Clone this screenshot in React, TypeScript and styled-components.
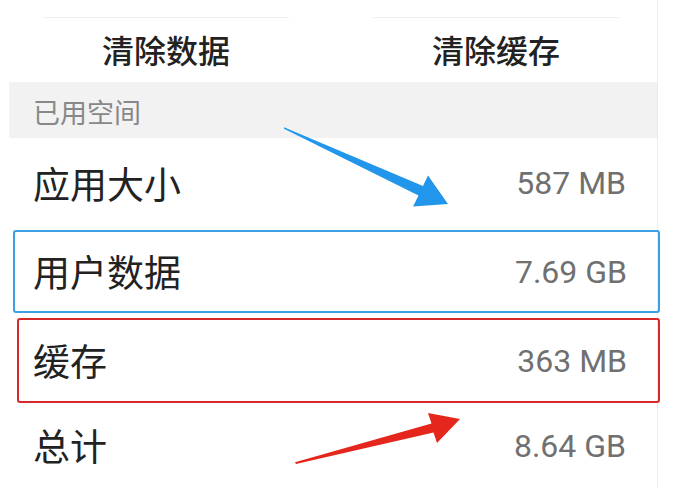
import React from "react";
import styled, { createGlobalStyle } from "styled-components";

const Global = createGlobalStyle`
  html, body { margin: 0; padding: 0; background: #ffffff; }
  body { font-family: "Noto Sans CJK SC", "Noto Sans", sans-serif; }
`;

const Page = styled.div`
  position: relative;
  width: 675px;
  height: 501px;
  overflow: hidden;
  background: #ffffff;
`;

const Panel = styled.div`
  margin-left: 9px;
  width: 648px;
  height: 488px;
  border-right: 1px solid #ececec;
  background: #ffffff;
  display: flex;
  flex-direction: column;
`;

const Header = styled.div`
  height: 82px;
  box-sizing: border-box;
  padding: 17px 38px 0 34px;
  display: grid;
  grid-template-columns: 1fr 1fr;
  column-gap: 84px;
`;

const ActionButton = styled.div`
  border-top: 1px solid #efefef;
  display: flex;
  align-items: center;
  justify-content: center;
  font-size: 32px;
  font-weight: 500;
  color: #222222;
  line-height: 1;
  padding-bottom: 2px;
`;

const SectionLabel = styled.div`
  height: 56px;
  box-sizing: border-box;
  background: #f2f2f2;
  padding-left: 24px;
  display: flex;
  align-items: center;
  font-size: 27px;
  color: #888888;
  line-height: 1;
  padding-top: 2px;
`;

type Tone = "none" | "blue" | "red";

const toneColor: Record<Tone, string> = {
  none: "transparent",
  blue: "#3b9fe1",
  red: "#d8272d",
};

const toneLeft: Record<Tone, number> = { none: 0, blue: 4, red: 8 };

const Row = styled.div<{ $tone: Tone; $h: number; $mt: number }>`
  box-sizing: border-box;
  height: ${(p) => p.$h}px;
  margin-top: ${(p) => p.$mt}px;
  display: flex;
  align-items: center;
  justify-content: space-between;
  border: 2px solid ${(p) => toneColor[p.$tone]};
  border-radius: 3px;
  margin-left: ${(p) => toneLeft[p.$tone]}px;
  margin-right: ${(p) => (p.$tone === "none" ? 0 : -3)}px;
  padding-left: ${(p) => 22 - toneLeft[p.$tone]}px;
  padding-right: ${(p) => (p.$tone === "none" ? 29 : 31)}px;
`;

const Label = styled.span`
  font-size: 37px;
  color: #222222;
  line-height: 1;
`;

const Value = styled.span`
  font-family: Roboto, "Noto Sans", sans-serif;
  font-size: 32px;
  color: #707070;
  line-height: 1;
`;

const Overlay = styled.svg`
  position: absolute;
  left: 0;
  top: 0;
  pointer-events: none;
`;

const rows: { label: string; value: string; tone: Tone; h: number; mt: number }[] = [
  { label: "应用大小", value: "587 MB", tone: "none", h: 90, mt: 0 },
  { label: "用户数据", value: "7.69 GB", tone: "blue", h: 83, mt: 2 },
  { label: "缓存", value: "363 MB", tone: "red", h: 85, mt: 5 },
  { label: "总计", value: "8.64 GB", tone: "none", h: 85, mt: 0 },
];

export default function App() {
  return (
    <Page>
      <Global />
      <Panel>
        <Header>
          <ActionButton>清除数据</ActionButton>
          <ActionButton>清除缓存</ActionButton>
        </Header>
        <SectionLabel>已用空间</SectionLabel>
        {rows.map((r) => (
          <Row key={r.label} $tone={r.tone} $h={r.h} $mt={r.mt}>
            <Label>{r.label}</Label>
            <Value>{r.value}</Value>
          </Row>
        ))}
      </Panel>
      <Overlay width={675} height={501} viewBox="0 0 675 501">
        <polygon
          points="284,127.3 423,186 428,175.5 448,204 413,206.5 418.5,195.5 284,128.8"
          fill="#2196ea"
        />
        <polygon
          points="295,462.3 431.5,423.5 428,413 460,419 437,443 433.5,432.5 296,464"
          fill="#e5261c"
        />
      </Overlay>
    </Page>
  );
}
